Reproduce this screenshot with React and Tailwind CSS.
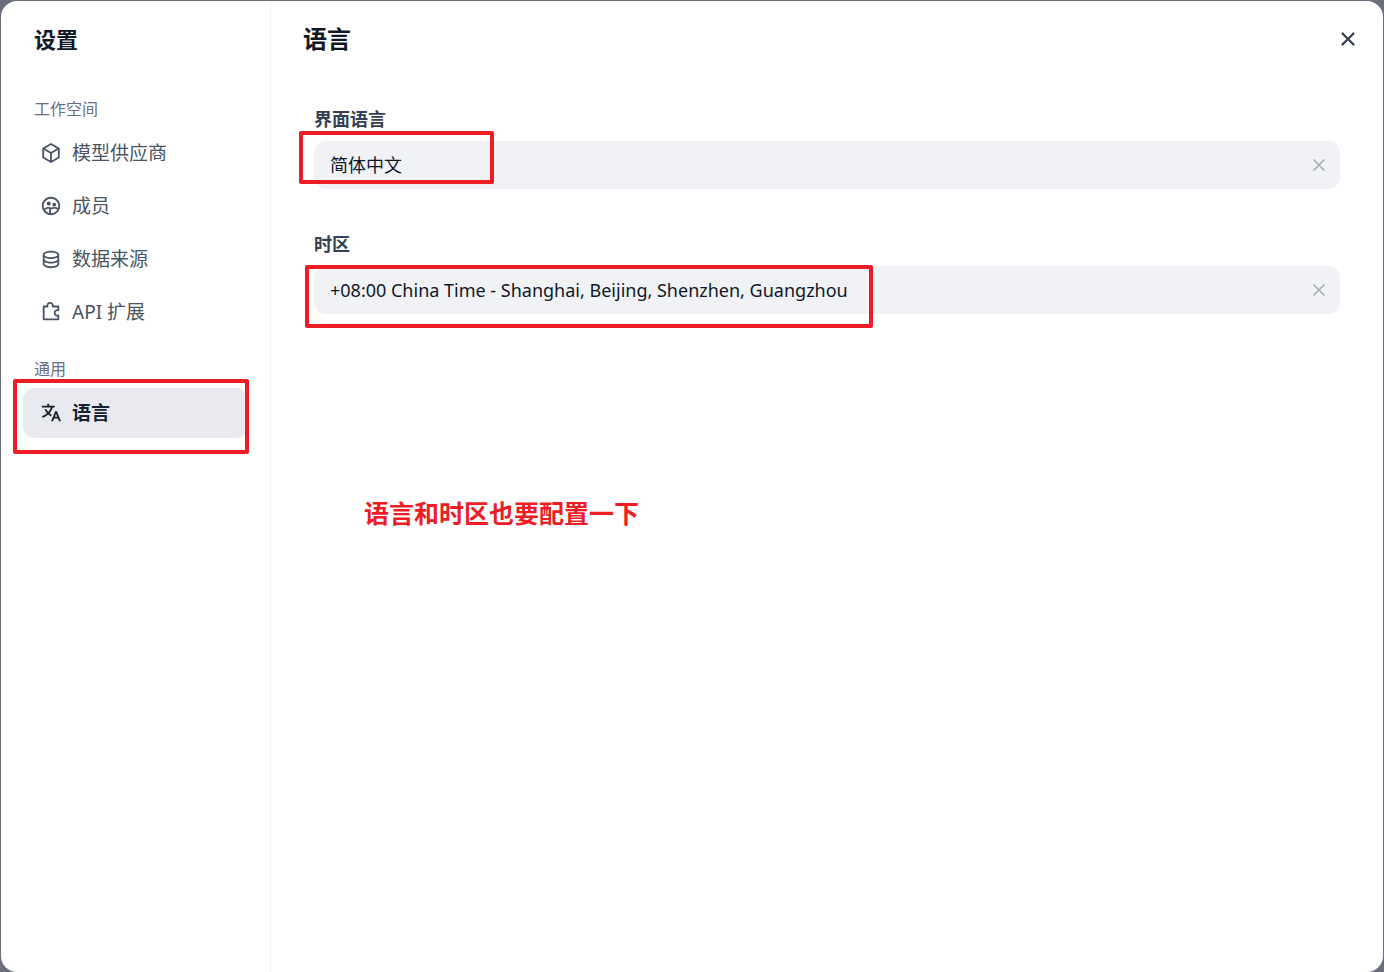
import React, { useState } from 'react';
import {
  RiBox3Line,
  RiCloseLine,
  RiDatabase2Line,
  RiGroup2Line,
  RiPuzzle2Line,
  RiTranslate2,
} from 'react-icons/ri';

const MENU = [
  {
    key: 'workspace',
    name: '工作空间',
    items: [
      { key: 'provider', name: '模型供应商', icon: RiBox3Line },
      { key: 'members', name: '成员', icon: RiGroup2Line },
      { key: 'data-source', name: '数据来源', icon: RiDatabase2Line },
      { key: 'api-extension', name: 'API 扩展', icon: RiPuzzle2Line },
    ],
  },
  {
    key: 'general',
    name: '通用',
    items: [{ key: 'language', name: '语言', icon: RiTranslate2, marked: true }],
  },
];

const LANGUAGES = ['简体中文'];
const TIMEZONES = ['+08:00 China Time - Shanghai, Beijing, Shenzhen, Guangzhou'];

// Red frame drawn over the part that has to be configured
const Highlight = ({ className }) => (
  <span
    aria-hidden="true"
    className={`pointer-events-none absolute rounded-xs border-4 border-[#ee1c25] ${className}`}
  />
);

const MenuItem = ({ item, active, onSelect }) => {
  const Icon = item.icon;

  return (
    <li className="relative">
      <button
        type="button"
        onClick={() => onSelect(item.key)}
        aria-current={active ? 'page' : undefined}
        className={`flex h-[50px] w-full items-center gap-2.5 rounded-xl px-[17px] text-[19px] ${
          active ? 'bg-[#e9eaef] font-bold text-[#18222f]' : 'text-[#495464]'
        }`}
      >
        <Icon className="size-[22px] shrink-0" />
        {item.name}
      </button>
      {item.marked && <Highlight className="-top-[9px] -right-px -bottom-4 -left-2.5" />}
    </li>
  );
};

const SelectField = ({ id, label, options, value, onChange, children }) => (
  <div>
    <label htmlFor={id} className="mb-2 block text-lg/[27px] font-bold text-[#354052]">
      {label}
    </label>
    <div className="relative flex h-12 items-center rounded-xl bg-[#f1f2f6] pr-[11px] pl-4">
      <select
        id={id}
        value={value}
        onChange={(e) => onChange(e.target.value)}
        className="h-full min-w-0 flex-1 appearance-none bg-transparent text-lg text-[#101828] outline-none"
      >
        <option value="" />
        {options.map((option) => (
          <option key={option} value={option}>
            {option}
          </option>
        ))}
      </select>
      <button type="button" aria-label="清除" onClick={() => onChange('')} className="text-[#a9adb5]">
        <svg viewBox="0 0 24 24" fill="none" stroke="currentColor" strokeWidth="2" strokeLinecap="round" className="size-5">
          <path d="M6 18L18 6M6 6l12 12" />
        </svg>
      </button>
      {children}
    </div>
  </div>
);

const App = () => {
  const [activeMenu, setActiveMenu] = useState('language');
  const [language, setLanguage] = useState(LANGUAGES[0]);
  const [timezone, setTimezone] = useState(TIMEZONES[0]);

  return (
    <div className="flex min-h-screen bg-[#6b6f7a] px-px pt-px font-['Noto_Sans','Noto_Sans_CJK_SC',sans-serif]">
      <div role="dialog" aria-label="设置" className="flex flex-1 rounded-2xl bg-white">
        <aside className="w-[270px] shrink-0 border-r border-[#f2f3f6] pr-[22px] pl-[22px]">
          <h1 className="mt-[22px] mb-[42px] pl-[11px] text-[22px]/8 font-bold text-[#101828]">设置</h1>
          <nav className="flex flex-col gap-5">
            {MENU.map((group) => (
              <div key={group.key}>
                <h2 className="mb-[7px] pl-[11px] text-base/6 text-[#676f83]">{group.name}</h2>
                <ul className="flex flex-col gap-[3px]">
                  {group.items.map((item) => (
                    <MenuItem
                      key={item.key}
                      item={item}
                      active={item.key === activeMenu}
                      onSelect={setActiveMenu}
                    />
                  ))}
                </ul>
              </div>
            ))}
          </nav>
        </aside>

        <main className="min-w-0 flex-1 pr-[22px] pl-8">
          <header className="mt-[22px] flex items-center justify-between">
            <h2 className="text-2xl/8 font-bold text-[#101828]">语言</h2>
            <button type="button" aria-label="关闭" className="text-[#354052]">
              <RiCloseLine className="size-[26px]" />
            </button>
          </header>

          <div className="mt-[51px] flex flex-col gap-[42px] pr-[21px] pl-[11px]">
            <SelectField
              id="interface-language"
              label="界面语言"
              options={LANGUAGES}
              value={language}
              onChange={setLanguage}
            >
              <Highlight className="-top-2.5 -left-[15px] h-[53px] w-[195px]" />
            </SelectField>
            <SelectField
              id="timezone"
              label="时区"
              options={TIMEZONES}
              value={timezone}
              onChange={setTimezone}
            >
              <Highlight className="-top-px -left-[9px] h-[63px] w-[568px]" />
            </SelectField>
          </div>

          <p className="mt-[179px] pl-[61px] text-[25px]/10 font-bold text-[#ee1c25]">
            语言和时区也要配置一下
          </p>
        </main>
      </div>
    </div>
  );
};

export default App;
